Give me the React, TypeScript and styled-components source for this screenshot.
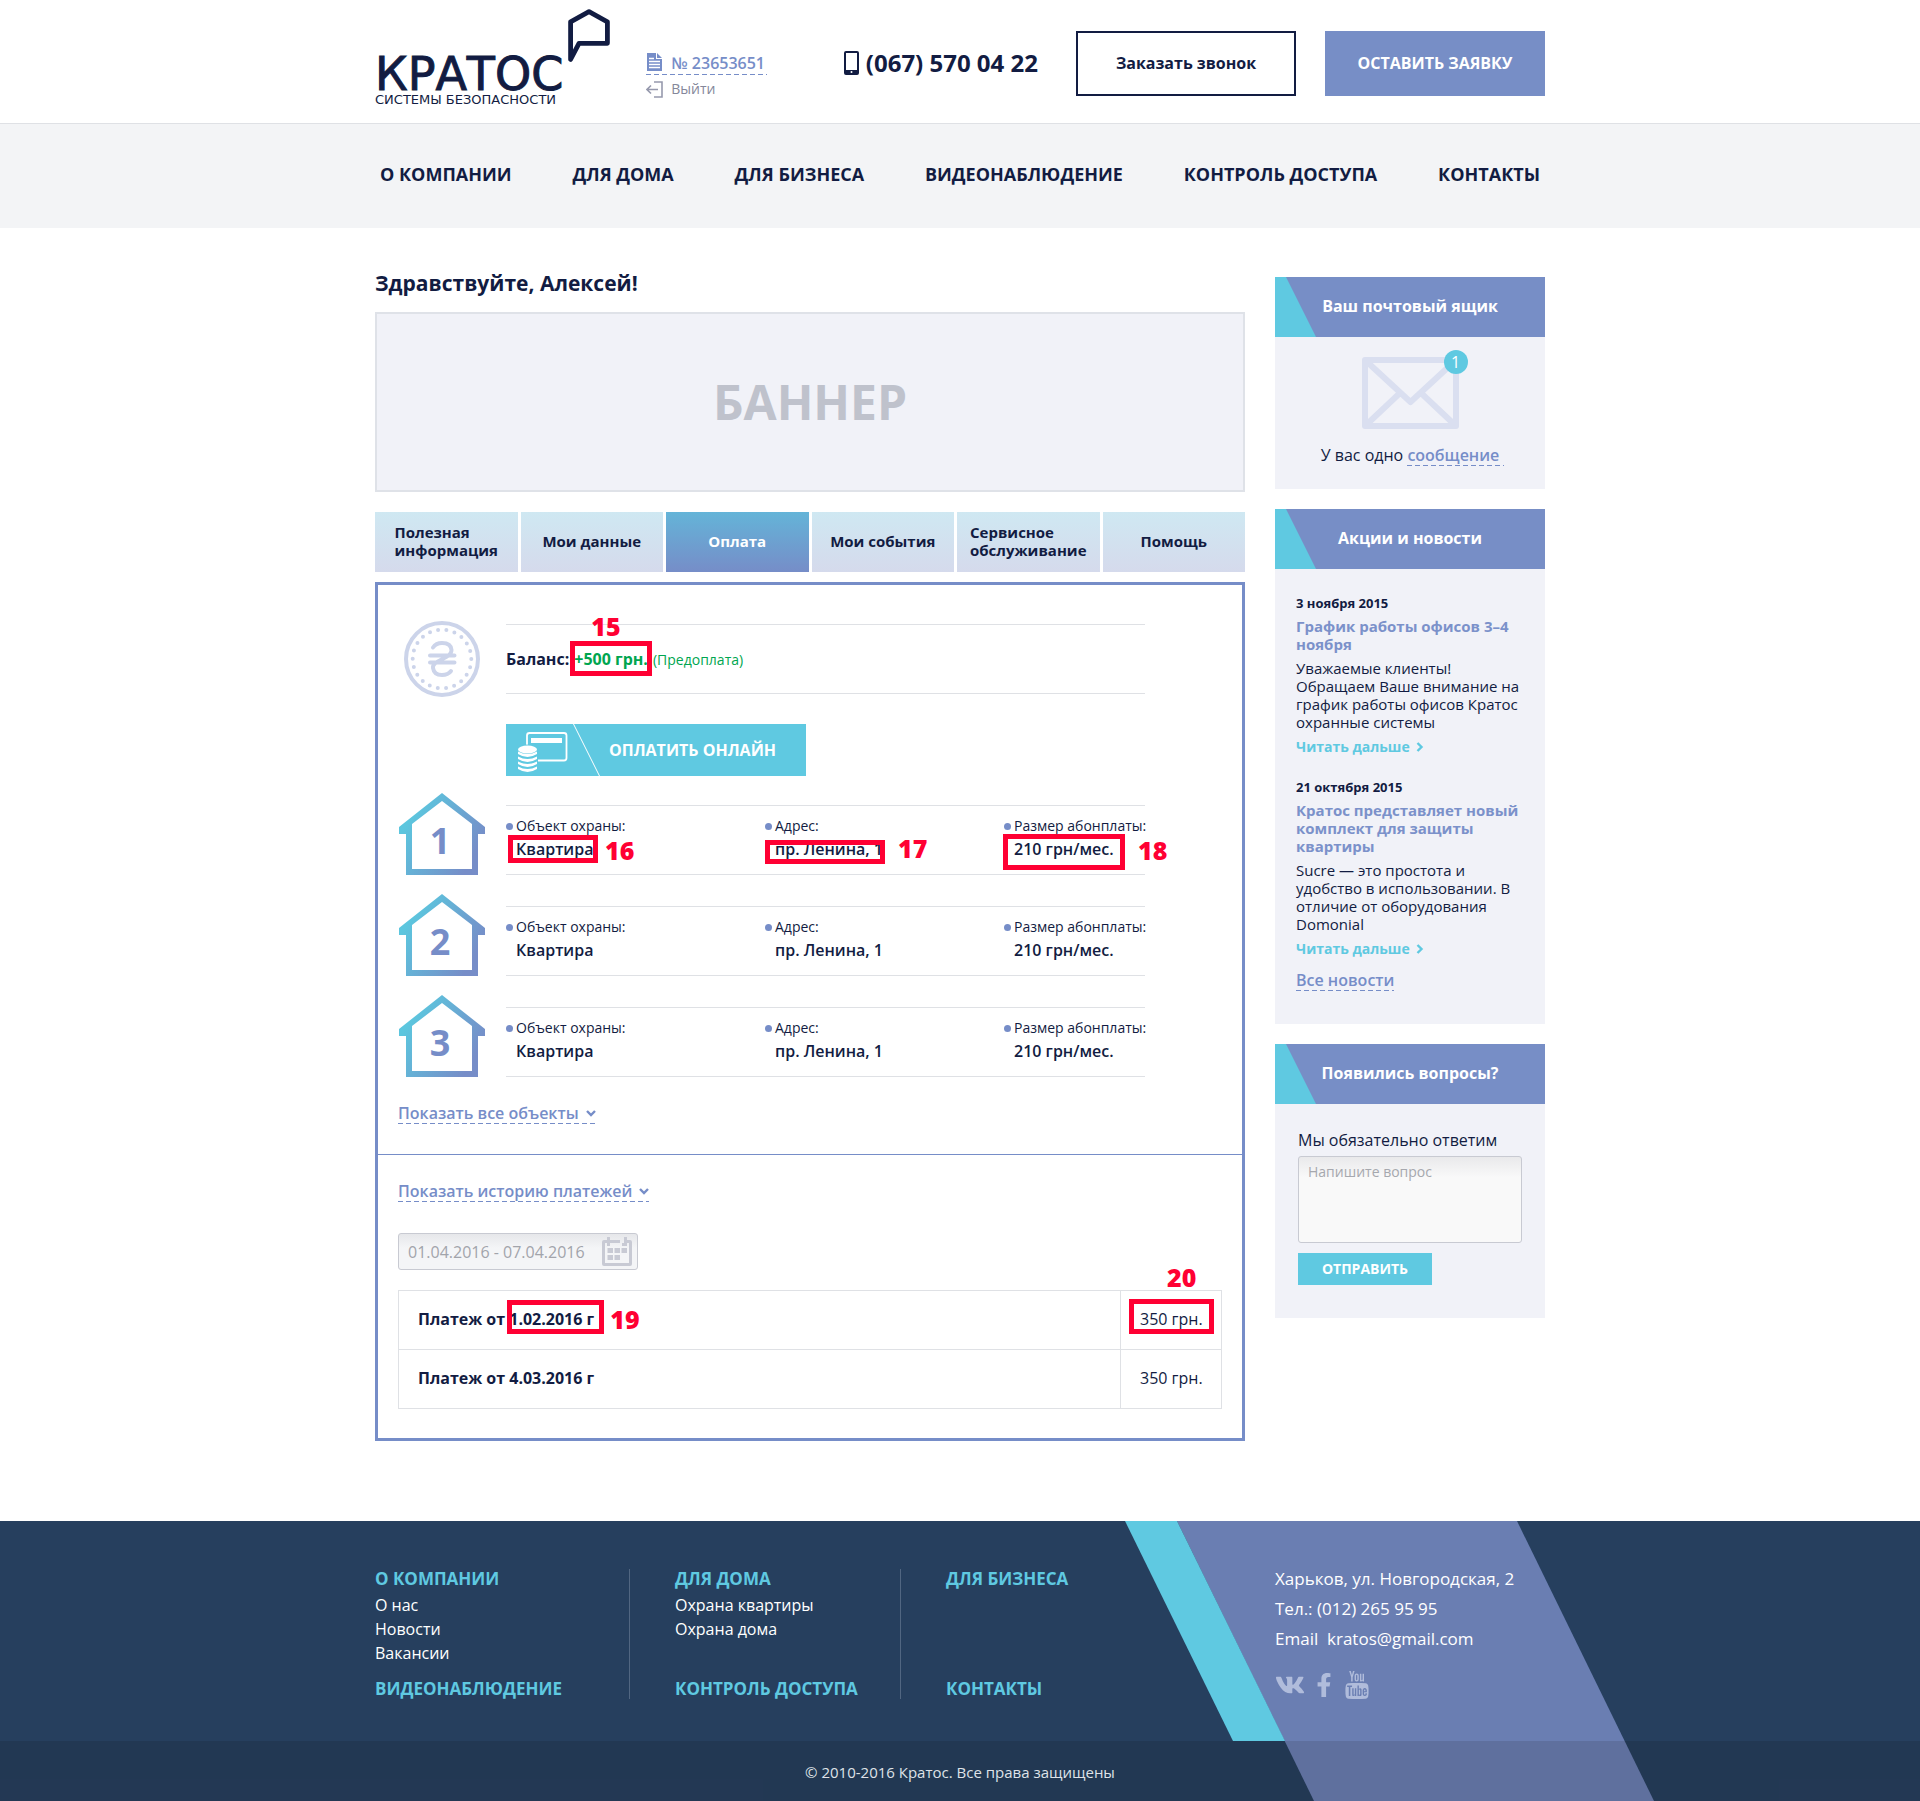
import React from "react";
import styled, { createGlobalStyle, css } from "styled-components";
import { FaFacebookF, FaVk } from "react-icons/fa";
import { TfiYoutube } from "react-icons/tfi";

const navy = "#121c42";
const periwinkle = "#768dc8";
const teal = "#5fc9e1";
const pale = "#f1f2f8";
const rule = "#dfe1e5";
const red = "#ff0033";

const GlobalStyle = createGlobalStyle`
  *, *::before, *::after { box-sizing: border-box; }
  body { margin: 0; background: #fff; color: ${navy}; font-family: "Open Sans", "Noto Sans", sans-serif; font-size: 16px; line-height: 22px; }
  h1, h2, h3, p, ul, dl, dd { margin: 0; padding: 0; }
  ul { list-style: none; }
  a { color: inherit; text-decoration: none; }
  button { border: 0; padding: 0; background: none; color: inherit; font: inherit; cursor: pointer; }
  svg { display: block; flex: none; }
`;

const Container = styled.div`
  width: 100%;
  max-width: 1170px;
  margin: 0 auto;
`;

const dashed = css`
  background: repeating-linear-gradient(90deg, ${periwinkle} 0 5px, transparent 5px 8px) left bottom / 100% 1px no-repeat;
`;

/* Header */

const Header = styled.header`
  background: #fff;
  border-bottom: 1px solid ${rule};
`;

const HeaderRow = styled(Container)`
  display: flex;
  align-items: flex-start;
  min-height: 123px;
`;

const Logo = styled.a`
  display: flex;
  gap: 5px;
  padding-top: 9px;
`;

const LogoText = styled.span`
  display: flex;
  flex-direction: column;
  gap: 4px;
  padding-top: 49px;
  font-family: "DejaVu Sans", sans-serif;
  white-space: nowrap;
`;

const LogoName = styled.span`
  font-size: 46px;
  line-height: 32px;
  -webkit-text-stroke: 1px ${navy};
`;

const LogoTagline = styled.span`
  font-size: 13px;
  line-height: 12px;
`;

const Account = styled.div`
  display: flex;
  flex-direction: column;
  align-items: flex-start;
  gap: 3px;
  margin-left: 36px;
  padding-top: 52px;
`;

const AccountNumber = styled.a`
  ${dashed}
  display: flex;
  gap: 8px;
  padding: 0 2px 1px 0;
  color: ${periwinkle};
  font-weight: 600;
`;

const Logout = styled.button`
  display: flex;
  align-items: center;
  gap: 8px;
  color: #85879a;
  font-size: 14px;
  line-height: 22px;
`;

const HeaderActions = styled.div`
  display: flex;
  align-items: center;
  gap: 29px;
  margin-left: auto;
  padding-top: 31px;
`;

const Phone = styled.a`
  display: flex;
  align-items: center;
  gap: 7px;
  margin-right: 9px;
  padding-bottom: 2px;
  font-size: 24px;
  font-weight: 700;
  line-height: 32px;
  white-space: nowrap;
`;

const CallButton = styled.button<{ $filled?: boolean }>`
  width: 220px;
  height: 65px;
  padding-bottom: 2px;
  border: 2px solid ${(p) => (p.$filled ? "#778ec6" : navy)};
  background: ${(p) => (p.$filled ? "#778ec6" : "#fff")};
  color: ${(p) => (p.$filled ? "#fff" : navy)};
  font-weight: 700;
`;

const Nav = styled.nav`
  background: #f3f4f6;
`;

const NavList = styled.ul`
  display: flex;
  justify-content: space-between;
  max-width: 1170px;
  margin: 0 auto;
  padding: 38px 5px 42px;
  font-size: 18px;
  font-weight: 700;
  line-height: 24px;
`;

/* Page body */

const Page = styled(Container)`
  display: grid;
  grid-template-columns: minmax(0, 1fr) 270px;
  gap: 30px;
  align-items: start;
  padding: 40px 0 80px;
`;

const Greeting = styled.h1`
  margin-bottom: 14px;
  font-size: 21px;
  font-weight: 700;
  line-height: 30px;
`;

const Banner = styled.div`
  display: flex;
  align-items: center;
  justify-content: center;
  height: 180px;
  border: 2px solid #dfe2e8;
  background: ${pale};
  color: #bfc2cc;
  font-size: 48px;
  font-weight: 700;
  line-height: 66px;
`;

const Tabs = styled.div`
  display: grid;
  grid-template-columns: repeat(6, 1fr);
  gap: 3px;
  margin: 20px 0 10px;
`;

const Tab = styled.button<{ $active?: boolean }>`
  display: flex;
  align-items: center;
  justify-content: center;
  height: 60px;
  padding-bottom: 2px;
  background: ${(p) =>
    p.$active ? "linear-gradient(#64b4d8, #768dc8)" : "linear-gradient(#cfe8f2, #d5daec)"};
  color: ${(p) => (p.$active ? "#fff" : navy)};
  font-size: 15px;
  font-weight: 700;
  line-height: 18px;
  text-align: left;
  white-space: pre-line;
`;

const Panel = styled.section`
  border: 3px solid ${periwinkle};
`;

const Objects = styled.div`
  display: grid;
  gap: 19px;
  padding: 36px 97px 0 0;
`;

const IconRow = styled.div<{ $end?: boolean }>`
  display: grid;
  grid-template-columns: 128px minmax(0, 1fr);
  align-items: ${(p) => (p.$end ? "end" : "center")};
  justify-items: center;
`;

const Balance = styled.div`
  display: flex;
  align-items: baseline;
  gap: 5px;
  width: 100%;
  height: 70px;
  padding-top: 23px;
  border: solid ${rule};
  border-width: 1px 0;
  font-weight: 700;
`;

const Positive = styled.span`
  color: #00a650;
`;

const BalanceNote = styled.span`
  color: #00a650;
  font-size: 14px;
  font-weight: 400;
`;

const PayButton = styled.button`
  display: flex;
  align-items: center;
  width: 300px;
  height: 52px;
  margin: 27px 0 -2px 128px;
  background: ${teal};
  color: #fff;
  font-weight: 700;
`;

const Facts = styled.dl`
  display: grid;
  grid-template-columns: 259px 239px minmax(0, 1fr);
  width: 100%;
  height: 70px;
  padding-top: 10px;
  border: solid ${rule};
  border-width: 1px 0;
  white-space: nowrap;
`;

const FactName = styled.dt`
  display: flex;
  align-items: center;
  gap: 3px;
  margin-bottom: 2px;
  font-size: 14px;
  line-height: 20px;

  &::before {
    content: "";
    flex: none;
    width: 7px;
    height: 7px;
    border-radius: 50%;
    background: ${periwinkle};
  }
`;

const FactValue = styled.dd`
  padding-left: 10px;
  font-weight: 600;
`;

const HouseFrame = styled.div`
  display: grid;
  place-items: center;
  color: ${periwinkle};
  font-size: 36px;
  font-weight: 700;
  line-height: 40px;

  > * {
    grid-area: 1 / 1;
  }
`;

const HouseNumber = styled.span`
  padding: 13px 4px 0 0;
`;

const Toggle = styled.button`
  ${dashed}
  display: flex;
  align-items: center;
  gap: 7px;
  color: ${periwinkle};
  font-weight: 600;
`;

const ToggleBar = styled.div`
  padding: 25px 20px 30px;
  border-bottom: 1px solid ${periwinkle};
`;

const History = styled.div`
  padding: 25px 20px 29px;
`;

const DateField = styled.label`
  display: flex;
  align-items: center;
  width: 240px;
  height: 37px;
  margin: 31px 0 20px;
  padding: 0 5px 0 9px;
  border: 1px solid #c8cad2;
  border-radius: 3px;
  background: linear-gradient(#e6e7ea, #f4f5f7 40%);
`;

const DateInput = styled.input`
  flex: 1;
  min-width: 0;
  padding: 0;
  border: 0;
  outline: 0;
  background: none;
  color: #a2a4ab;
  font: inherit;
`;

const Payments = styled.table`
  width: 100%;
  border-collapse: collapse;

  th,
  td {
    height: 59px;
    padding: 0 18px 2px 19px;
    border: 1px solid ${rule};
    text-align: left;
    white-space: nowrap;
  }

  td {
    width: 101px;
    font-weight: 400;
  }
`;

/* Numbered call-outs laid over the values */

const Marked = styled.span`
  position: relative;
`;

const MarkFrame = styled.span<{ $box: number[] }>`
  position: absolute;
  left: ${(p) => p.$box[0]}px;
  top: ${(p) => p.$box[1]}px;
  width: ${(p) => p.$box[2]}px;
  height: ${(p) => p.$box[3]}px;
  border: 5px solid ${red};
`;

const MarkNumber = styled.span<{ $at: number[] }>`
  position: absolute;
  left: ${(p) => p.$at[0]}px;
  top: ${(p) => p.$at[1]}px;
  color: ${red};
  font-size: 25px;
  font-weight: 800;
  line-height: 24px;
`;

type MarkSpec = { label: string; box: number[]; at: number[] };

function Mark({ spec, children }: { spec?: MarkSpec; children: React.ReactNode }) {
  if (!spec) return <>{children}</>;
  return (
    <Marked>
      {children}
      <MarkFrame $box={spec.box} />
      <MarkNumber $at={spec.at}>{spec.label}</MarkNumber>
    </Marked>
  );
}

/* Sidebar */

const Sidebar = styled.aside`
  display: grid;
  gap: 20px;
  padding-top: 9px;
`;

const CardTitle = styled.h2`
  position: relative;
  padding: 18px 0 20px;
  background: #778ec6;
  color: #fff;
  font-size: 16px;
  font-weight: 700;
  line-height: 22px;
  text-align: center;

  &::before {
    content: "";
    position: absolute;
    inset: 0 auto 0 0;
    width: 41px;
    background: ${teal};
    clip-path: polygon(0 0, 11px 0, 100% 100%, 0 100%);
  }
`;

const MailBody = styled.div`
  display: flex;
  flex-direction: column;
  align-items: center;
  gap: 15px;
  padding: 20px 0 23px;
  background: ${pale};
`;

const Envelope = styled.div`
  position: relative;
`;

const Badge = styled.span`
  position: absolute;
  top: -7px;
  right: -9px;
  width: 24px;
  height: 24px;
  border-radius: 50%;
  background: ${teal};
  color: #fff;
  line-height: 24px;
  text-align: center;
`;

const DashedLink = styled.a`
  ${dashed}
  display: inline-block;
  color: ${periwinkle};
  font-weight: 600;
`;

const MessageLink = styled(DashedLink)`
  margin-right: -5px;
  padding-right: 5px;
`;

const NewsBody = styled.div`
  padding: 25px 21px 33px;
  background: ${pale};
`;

const NewsItem = styled.article`
  margin-bottom: 22px;
  font-size: 15px;
  line-height: 18px;

  &:last-of-type {
    margin-bottom: 11px;
  }
`;

const NewsDate = styled.time`
  display: block;
  font-size: 13px;
  font-weight: 700;
`;

const NewsTitle = styled.h3`
  margin: 5px 0 6px;
  color: #7b91ca;
  font-size: 15px;
  font-weight: 700;
`;

const ReadMore = styled.a`
  display: flex;
  align-items: center;
  gap: 6px;
  margin-top: 7px;
  color: ${teal};
  font-size: 14px;
  font-weight: 700;
`;

const QuestionForm = styled.form`
  display: flex;
  flex-direction: column;
  align-items: flex-start;
  padding: 25px 23px 33px;
  background: ${pale};
`;

const Question = styled.textarea`
  width: 100%;
  height: 87px;
  margin: 5px 0 10px;
  padding: 5px 9px;
  border: 1px solid #c8cad2;
  border-radius: 3px;
  background: linear-gradient(#e9e9eb, #f9f9f9 24%);
  color: ${navy};
  font: 14px/20px "Open Sans", sans-serif;
  resize: none;

  &::placeholder {
    color: #a6a8ae;
  }
`;

const SendButton = styled.button`
  width: 134px;
  height: 32px;
  background: ${teal};
  color: #fff;
  font-size: 14px;
  font-weight: 700;
`;

/* Footer */

const Footer = styled.footer`
  position: relative;
  overflow: hidden;
  background: #263f5e;
  color: #fff;
`;

const Stripe = styled.div`
  position: absolute;
  top: 0;
  bottom: 0;
  left: calc(50% + 217px);
  width: 477px;
  background: #6a7eb2;
  clip-path: polygon(0 0, 340px 0, 100% 100%, 137px 100%);
`;

const TealStripe = styled.div`
  position: absolute;
  top: 0;
  bottom: 60px;
  left: calc(50% + 165px);
  width: 160px;
  background: ${teal};
  clip-path: polygon(0 0, 52px 0, 100% 100%, 108px 100%);
`;

const FooterRow = styled(Container)`
  position: relative;
  display: grid;
  grid-template-columns: 255px 271px minmax(0, 1fr) 270px;
  height: 220px;
  padding: 43px 0 41px;
`;

const FooterColumn = styled.div<{ $first?: boolean; $last?: boolean }>`
  display: flex;
  flex-direction: column;
  justify-content: space-between;
  height: 130px;
  margin-top: 5px;
  padding-left: ${(p) => (p.$first ? 0 : 45)}px;
  border-right: ${(p) => (p.$last ? 0 : 1)}px solid #516681;
`;

const FooterHeading = styled.a`
  display: block;
  color: ${teal};
  font-size: 17px;
  font-weight: 700;
  line-height: 20px;
  white-space: nowrap;
`;

const FooterLinks = styled.ul`
  margin-top: 4px;
  line-height: 24px;
`;

const Contacts = styled.address`
  font-size: 17px;
  font-style: normal;
  line-height: 30px;
  white-space: pre;
`;

const Social = styled.div`
  display: flex;
  align-items: center;
  gap: 7px;
  margin-top: 16px;
  color: #b0bcdb;
`;

const Copyright = styled.div`
  position: relative;
  padding: 20px 0 18px;
  background: rgba(10, 0, 0, 0.11);
  color: #dfe3e8;
  font-size: 15px;
  line-height: 22px;
  text-align: center;
`;

/* Drawings */

const LogoMark = () => (
  <svg width="42" height="54" viewBox="0 0 42 54" fill="none" stroke={navy} strokeWidth="4.8" strokeLinejoin="round">
    <path d="M21 2.6 39.4 12.8V34.3H11L2.6 50.4V12.8Z" />
  </svg>
);

const DocIcon = () => (
  <svg width="17" height="20" viewBox="0 0 17 20">
    <path fill={periwinkle} d="M1 1h9v6h6v12H1Z M11 1l5 5h-5Z" />
    <path stroke="#fff" strokeWidth="1.3" d="M3 6.5h5M3 9.5h11M3 12.5h11M3 15.5h11" />
  </svg>
);

const ExitIcon = () => (
  <svg width="17" height="17" viewBox="0 0 17 17" fill="none" stroke="#9699ad" strokeWidth="1.6">
    <path d="M8 1h8v15H8M12 8.5H1.500M5 4.500 1 8.500l4 4" />
  </svg>
);

const PhoneIcon = () => (
  <svg width="15" height="24" viewBox="0 0 15 24">
    <rect x="1" y="1" width="13" height="22" rx="1" fill="#fff" stroke={navy} strokeWidth="2" />
    <path fill={navy} d="M1 19h13v4H1Z" />
    <circle cx="7.5" cy="21" r="1" fill="#fff" />
  </svg>
);

const Coin = () => (
  <svg width="76" height="76" viewBox="0 0 76 76" fill="none" stroke="#ccd4ea" strokeLinecap="round">
    <circle cx="38" cy="38" r="36" strokeWidth="4" />
    <circle cx="38" cy="38" r="29.3" strokeWidth="4" strokeDasharray="0 8.368" />
    <path strokeWidth="4" d="M29 26.500Q32 22 38 22Q47 22 47.500 29Q47.500 33 43 35.500L33 41Q28.500 43.500 29 47Q30 54 38 54Q44 54 47 50M26 34.500h24.500M26 41.500h24.500" />
  </svg>
);

const PayIcon = () => (
  <svg width="103" height="52" viewBox="0 0 103 52" fill="none">
    <rect x="21" y="9" width="39.500" height="27.500" rx="2.500" stroke="#fff" strokeWidth="1.800" />
    <path fill="#fff" d="M25 14h31v5H25Z" />
    <path fill={teal} d="M10 24q11-7 22 0v22H10Z" />
    <ellipse cx="21.500" cy="25.500" rx="9.500" ry="4" fill="#fff" />
    {[0, 5, 10, 15].map((y) => (
      <path key={y} fill="#fff" transform={`translate(0 ${y})`} d="M12 27.500q9.500 5 19 0v2.500q-9.500 6-19 0Z" />
    ))}
    <path stroke="#fff" d="M67.500 0 93.500 52" />
  </svg>
);

function House({ n }: { n: number }) {
  const id = `house-${n}`;
  return (
    <HouseFrame>
      <svg width="86" height="82" viewBox="0 0 86 82">
        <defs>
          <linearGradient id={id} x1="8" y1="30" x2="72" y2="68" gradientUnits="userSpaceOnUse">
            <stop offset="0" stopColor="#5cc6de" />
            <stop offset="1" stopColor={periwinkle} />
          </linearGradient>
        </defs>
        <path
          fill={`url(#${id})`}
          fillRule="evenodd"
          d="M43 0 86 34v7h-7v41H7V41H0v-7ZM43 8 13 31v45h60V31Z"
        />
      </svg>
      <HouseNumber>{n}</HouseNumber>
    </HouseFrame>
  );
}

const Chevron = ({ right }: { right?: boolean }) => (
  <svg
    width={right ? 8 : 10}
    height={right ? 10 : 8}
    viewBox={right ? "0 0 8 10" : "0 0 10 8"}
    fill="none"
    stroke="currentColor"
    strokeWidth="2.4"
  >
    <path d={right ? "M1.500 1 5.500 5 1.500 9" : "M1 2 5 6l4-4"} />
  </svg>
);

const CalendarIcon = () => (
  <svg width="30" height="29" viewBox="0 0 30 29" fill="#c8cad4">
    <path fillRule="evenodd" d="M0 5Q0 3 2 3h3V0h3v3h10v3H8v3H5V6H3v20h24V6h-2v3h-5V6h2V0h3v3h3q2 0 2 2v22q0 2-2 2H2q-2 0-2-2Z" />
    <path d="M5.500 11h5.500v5H5.500ZM12.500 11H18v5h-5.500ZM19.500 11H25v5h-5.500ZM5.500 18h5.500v5H5.500ZM12.500 18H18v5h-5.500Z" />
  </svg>
);

const EnvelopeIcon = () => (
  <svg width="97" height="72" viewBox="0 0 97 72" fill="none" stroke="#dadff0" strokeWidth="6" strokeLinejoin="round">
    <path d="M3 3h91v66H3ZM3 3l45.500 42L94 3M3 69l35-33M94 69 59 36" />
  </svg>
);

/* Data */

const menu = ["О КОМПАНИИ", "ДЛЯ ДОМА", "ДЛЯ БИЗНЕСА", "ВИДЕОНАБЛЮДЕНИЕ", "КОНТРОЛЬ ДОСТУПА", "КОНТАКТЫ"];

const tabs = ["Полезная\nинформация", "Мои данные", "Оплата", "Мои события", "Сервисное\nобслуживание", "Помощь"];

const balanceMark = { label: "15", box: [-4, -7, 82, 35], at: [17, -34] };

const facts = [
  { name: "Объект охраны:", value: "Квартира", mark: { label: "16", box: [-8, -3, 90, 28], at: [89, 0] } },
  { name: "Адрес:", value: "пр. Ленина, 1", mark: { label: "17", box: [-10, 2, 120, 24], at: [123, -2] } },
  { name: "Размер абонплаты:", value: "210 грн/мес.", mark: { label: "18", box: [-11, -4, 122, 36], at: [124, 0] } },
];

const payments = [
  {
    date: "1.02.2016 г",
    sum: "350 грн.",
    dateMark: { label: "19", box: [-2, -8, 97, 34], at: [101, -1] },
    sumMark: { label: "20", box: [-11, -9, 85, 35], at: [27, -43] },
  },
  { date: "4.03.2016 г", sum: "350 грн." },
];

const news = [
  {
    date: "3 ноября 2015",
    title: "График работы офисов 3–4 ноября",
    text: "Уважаемые клиенты! Обращаем Ваше внимание на график работы офисов Кратос охранные системы",
  },
  {
    date: "21 октября 2015",
    title: "Кратос представляет новый комплект для защиты квартиры",
    text: "Sucre — это простота и удобство в использовании. В отличие от оборудования Domonial",
  },
];

const footerColumns = [
  { top: menu[0], links: ["О нас", "Новости", "Вакансии"], bottom: menu[3] },
  { top: menu[1], links: ["Охрана квартиры", "Охрана дома"], bottom: menu[4] },
  { top: menu[2], links: [], bottom: menu[5] },
];

export default function App() {
  return (
    <>
      <GlobalStyle />
      <Header>
        <HeaderRow>
          <Logo href="#">
            <LogoText>
              <LogoName>КРАТОС</LogoName>
              <LogoTagline>СИСТЕМЫ БЕЗОПАСНОСТИ</LogoTagline>
            </LogoText>
            <LogoMark />
          </Logo>
          <Account>
            <AccountNumber href="#">
              <DocIcon />№ 23653651
            </AccountNumber>
            <Logout type="button">
              <ExitIcon />
              Выйти
            </Logout>
          </Account>
          <HeaderActions>
            <Phone href="tel:+380675700422">
              <PhoneIcon />
              (067) 570 04 22
            </Phone>
            <CallButton type="button">Заказать звонок</CallButton>
            <CallButton type="button" $filled>
              ОСТАВИТЬ ЗАЯВКУ
            </CallButton>
          </HeaderActions>
        </HeaderRow>
      </Header>
      <Nav>
        <NavList>
          {menu.map((m) => (
            <li key={m}>
              <a href="#">{m}</a>
            </li>
          ))}
        </NavList>
      </Nav>

      <Page>
        <main>
          <Greeting>Здравствуйте, Алексей!</Greeting>
          <Banner>БАННЕР</Banner>
          <Tabs role="tablist">
            {tabs.map((t) => (
              <Tab key={t} type="button" role="tab" aria-selected={t === "Оплата"} $active={t === "Оплата"}>
                {t}
              </Tab>
            ))}
          </Tabs>
          <Panel>
            <Objects>
              <div>
                <IconRow>
                  <Coin />
                  <Balance>
                    Баланс:
                    <Positive>
                      <Mark spec={balanceMark}>+500 грн.</Mark>
                    </Positive>
                    <BalanceNote>(Предоплата)</BalanceNote>
                  </Balance>
                </IconRow>
                <PayButton type="button">
                  <PayIcon />
                  ОПЛАТИТЬ ОНЛАЙН
                </PayButton>
              </div>
              {[1, 2, 3].map((n) => (
                <IconRow key={n} $end>
                  <House n={n} />
                  <Facts>
                    {facts.map((f) => (
                      <div key={f.name}>
                        <FactName>{f.name}</FactName>
                        <FactValue>
                          <Mark spec={n === 1 ? f.mark : undefined}>{f.value}</Mark>
                        </FactValue>
                      </div>
                    ))}
                  </Facts>
                </IconRow>
              ))}
            </Objects>
            <ToggleBar>
              <Toggle type="button">
                Показать все объекты
                <Chevron />
              </Toggle>
            </ToggleBar>
            <History>
              <Toggle type="button">
                Показать историю платежей
                <Chevron />
              </Toggle>
              <DateField>
                <DateInput aria-label="Период" defaultValue="01.04.2016 - 07.04.2016" />
                <CalendarIcon />
              </DateField>
              <Payments>
                <tbody>
                  {payments.map((p) => (
                    <tr key={p.date}>
                      <th scope="row">
                        Платеж от <Mark spec={p.dateMark}>{p.date}</Mark>
                      </th>
                      <td>
                        <Mark spec={p.sumMark}>{p.sum}</Mark>
                      </td>
                    </tr>
                  ))}
                </tbody>
              </Payments>
            </History>
          </Panel>
        </main>

        <Sidebar>
          <section>
            <CardTitle>Ваш почтовый ящик</CardTitle>
            <MailBody>
              <Envelope>
                <EnvelopeIcon />
                <Badge>1</Badge>
              </Envelope>
              <p>
                У вас одно <MessageLink href="#">сообщение</MessageLink>
              </p>
            </MailBody>
          </section>
          <section>
            <CardTitle>Акции и новости</CardTitle>
            <NewsBody>
              {news.map((n) => (
                <NewsItem key={n.date}>
                  <NewsDate>{n.date}</NewsDate>
                  <NewsTitle>{n.title}</NewsTitle>
                  <p>{n.text}</p>
                  <ReadMore href="#">
                    Читать дальше
                    <Chevron right />
                  </ReadMore>
                </NewsItem>
              ))}
              <DashedLink href="#">Все новости</DashedLink>
            </NewsBody>
          </section>
          <section>
            <CardTitle>Появились вопросы?</CardTitle>
            <QuestionForm>
              <label htmlFor="question">Мы обязательно ответим</label>
              <Question id="question" placeholder="Напишите вопрос" />
              <SendButton type="button">ОТПРАВИТЬ</SendButton>
            </QuestionForm>
          </section>
        </Sidebar>
      </Page>

      <Footer>
        <Stripe />
        <TealStripe />
        <FooterRow>
          {footerColumns.map((c, i) => (
            <FooterColumn key={c.top} $first={i === 0} $last={i === 2}>
              <div>
                <FooterHeading href="#">{c.top}</FooterHeading>
                <FooterLinks>
                  {c.links.map((l) => (
                    <li key={l}>
                      <a href="#">{l}</a>
                    </li>
                  ))}
                </FooterLinks>
              </div>
              <FooterHeading href="#">{c.bottom}</FooterHeading>
            </FooterColumn>
          ))}
          <Contacts>
            <div>Харьков, ул. Новгородская, 2</div>
            <div>Тел.: (012) 265 95 95</div>
            <div>
              {"Email  "}
              <a href="mailto:kratos@gmail.com">kratos@gmail.com</a>
            </div>
            <Social>
              <a href="#" aria-label="ВКонтакте">
                <FaVk size={30} />
              </a>
              <a href="#" aria-label="Facebook">
                <FaFacebookF size={24} />
              </a>
              <a href="#" aria-label="YouTube">
                <TfiYoutube size={28} />
              </a>
            </Social>
          </Contacts>
        </FooterRow>
        <Copyright>© 2010-2016 Кратос. Все права защищены</Copyright>
      </Footer>
    </>
  );
}
